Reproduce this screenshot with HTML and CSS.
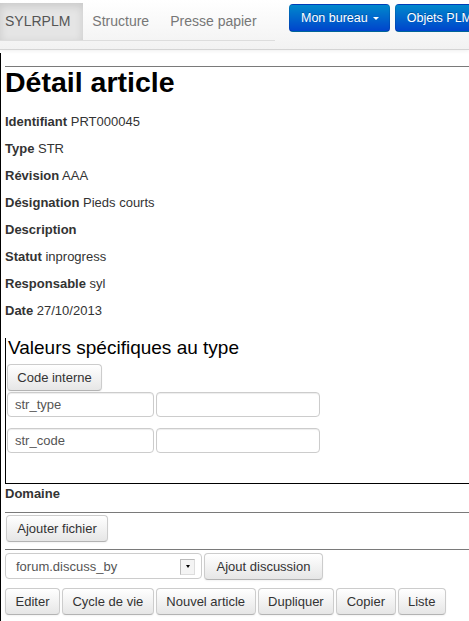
FILE: index.html
```html
<!DOCTYPE html>
<html lang="fr">
<head>
<meta charset="utf-8">
<title>Détail article</title>
<link rel="stylesheet" href="styles.css">
</head>
<body>
<div class="navbar">
  <ul class="tabs">
    <li class="tab active">SYLRPLM</li>
    <li class="tab">Structure</li>
    <li class="tab">Presse papier</li>
  </ul>
  <div class="nav-btns">
    <button class="btn-primary">Mon bureau <span class="caret"></span></button>
    <button class="btn-primary">Objets PLM</button>
  </div>
</div>
<div class="page">
  <hr class="rule">
  <h1 class="title">Détail article</h1>
  <div class="details">
    <p class="row"><b>Identifiant</b> PRT000045</p>
    <p class="row"><b>Type</b> STR</p>
    <p class="row"><b>Révision</b> AAA</p>
    <p class="row"><b>Désignation</b> Pieds courts</p>
    <p class="row"><b>Description</b></p>
    <p class="row"><b>Statut</b> inprogress</p>
    <p class="row"><b>Responsable</b> syl</p>
    <p class="row"><b>Date</b> 27/10/2013</p>
  </div>
  <div class="fieldset">
    <div class="legend">Valeurs spécifiques au type</div>
    <button class="btn btn-code">Code interne</button>
    <div class="input-row">
      <div class="input in-key">str_type</div>
      <div class="input in-val"></div>
    </div>
    <div class="input-row">
      <div class="input in-key">str_code</div>
      <div class="input in-val"></div>
    </div>
  </div>
  <p class="row domaine"><b>Domaine</b></p>
  <hr class="rule">
  <button class="btn btn-file">Ajouter fichier</button>
  <hr class="rule">
  <div class="discuss">
    <div class="select">
      <span class="select-text">forum.discuss_by</span>
      <span class="select-arrow"><span class="tri"></span></span>
    </div>
    <button class="btn">Ajout discussion</button>
  </div>
  <div class="actions">
    <button class="btn">Editer</button>
    <button class="btn">Cycle de vie</button>
    <button class="btn">Nouvel article</button>
    <button class="btn">Dupliquer</button>
    <button class="btn">Copier</button>
    <button class="btn">Liste</button>
  </div>
</div>
</body>
</html>
```

FILE: styles.css
```css
html, body {
  margin: 0;
  padding: 0;
  background: #fff;
  overflow: hidden;
}
body {
  font-family: "Liberation Sans", Arial, sans-serif;
  font-size: 13px;
  color: #333;
}
.navbar {
  height: 49px;
  border-bottom: 1px solid #d4d4d4;
  background: linear-gradient(#ffffff, #f2f2f2);
  box-shadow: 0 1px 4px rgba(0,0,0,0.065);
  display: flex;
  align-items: flex-start;
  white-space: nowrap;
  overflow: hidden;
}
.tabs {
  list-style: none;
  margin: 3px 0 0 0;
  padding: 0;
  display: flex;
  width: 275px;
  height: 37px;
  border-bottom: 1px solid #ddd;
  flex-shrink: 0;
}
.tab {
  font-size: 14px;
  line-height: 36px;
  padding: 0 12px 0 9px;
  color: #777;
}
.tab.active {
  padding: 0 13px 0 5px;
  color: #555;
  background: #e5e5e5;
  box-shadow: inset 0 3px 8px rgba(0,0,0,0.125);
  height: 37px;
}
.nav-btns {
  display: flex;
  gap: 5px;
  margin: 4px 0 0 14px;
  flex-shrink: 0;
}
.btn-primary {
  font-family: "Liberation Sans", Arial, sans-serif;
  font-size: 12.5px;
  height: 28px;
  padding: 0 10px 0 11px;
  color: #fff;
  background: linear-gradient(#0088cc, #0044cc);
  border: 1px solid;
  border-color: rgba(0,0,0,0.1) rgba(0,0,0,0.1) rgba(0,0,0,0.25);
  border-radius: 4px;
  text-shadow: 0 -1px 0 rgba(0,0,0,0.25);
  display: flex;
  align-items: center;
  gap: 5px;
  flex-shrink: 0;
}
.caret {
  display: inline-block;
  width: 0;
  height: 0;
  border-top: 3px solid #fff;
  border-left: 3px solid transparent;
  border-right: 3px solid transparent;
  margin-top: 1px;
}
.page {
  margin-top: 3px;
  border-left: 1px solid #000;
  padding: 13px 0 6px 4px;
}
.rule {
  margin: 0;
  border: 0;
  border-top: 1px solid #7a7a7a;
  height: 0;
}
.title {
  margin: 0 0 16px 0;
  font-size: 28.5px;
  line-height: 30px;
  font-weight: bold;
  color: #000;
}
.row {
  margin: 0 0 9px 0;
  line-height: 18px;
  font-size: 13px;
  color: #333;
}
.row b {
  font-weight: bold;
}
.details .row:last-child {
  margin-bottom: 0;
}
.fieldset {
  margin-top: 18px;
  border-left: 1px solid #000;
  border-bottom: 1px solid #000;
  padding: 0 0 30px 1px;
}
.legend {
  font-size: 19px;
  line-height: 20px;
  color: #000;
  padding-left: 1px;
  margin: 0 0 6px 0;
}
.btn {
  font-family: "Liberation Sans", Arial, sans-serif;
  font-size: 13px;
  color: #333;
  height: 27px;
  padding: 0 10px;
  background: linear-gradient(#ffffff, #e6e6e6);
  border: 1px solid #cccccc;
  border-bottom-color: #b3b3b3;
  border-radius: 4px;
  box-shadow: inset 0 1px 0 rgba(255,255,255,0.2), 0 1px 2px rgba(0,0,0,0.05);
  display: inline-flex;
  align-items: center;
  white-space: nowrap;
}
.btn-code {
  padding: 0 11px;
  width: 95px;
  justify-content: center;
  margin-bottom: 1px;
}
.input-row {
  display: flex;
  gap: 2px;
  margin-bottom: 11px;
}
.input-row:last-child {
  margin-bottom: 0;
}
.input {
  height: 23px;
  border: 1px solid #ccc;
  border-radius: 4px;
  box-sizing: content-box;
  color: #555;
  line-height: 23px;
  padding: 0 7px;
  box-shadow: inset 0 1px 1px rgba(0,0,0,0.075);
}
.in-key {
  width: 131px;
}
.in-val {
  width: 148px;
}
.domaine {
  margin-top: 1px;
}
.btn-file {
  margin: 2px 0 7px 1px;
  width: 102px;
  justify-content: center;
}
.discuss {
  display: flex;
  gap: 2px;
  margin-top: 3px;
  align-items: flex-start;
}
.select {
  height: 24px;
  border: 1px solid #ccc;
  border-radius: 4px;
  display: flex;
  align-items: center;
  justify-content: space-between;
  padding: 0 6px 0 0;
  box-sizing: content-box;
  width: 189px;
  color: #555;
}
.select-text {
  padding-left: 10px;
}
.select-arrow {
  width: 13px;
  height: 14px;
  border: 1px solid #bbb;
  border-right-color: #ddd;
  border-bottom-color: #ddd;
  background: #f4f4f4;
  display: flex;
  align-items: center;
  justify-content: center;
  margin-top: 1px;
}
.tri {
  width: 0;
  height: 0;
  border-top: 3px solid #000;
  border-left: 2px solid transparent;
  border-right: 2px solid transparent;
}
.discuss .btn {
  height: 27px;
  padding: 0 14px;
  width: 119px;
  justify-content: center;
}
.actions {
  display: flex;
  gap: 2px;
  margin-top: 8px;
}
.actions .btn {
  height: 27px;
  padding: 0 9.5px;
}
```
